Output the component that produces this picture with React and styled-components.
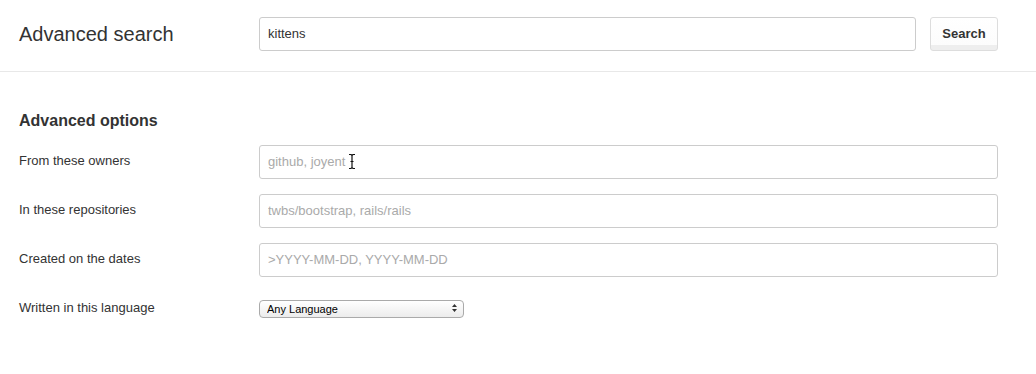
import React from 'react'
import styled, { createGlobalStyle } from 'styled-components'

const Global = createGlobalStyle`
body{
  margin:0;
  background:#fff;
  font-family:"Liberation Sans", Arial, sans-serif;
  color:#333;
}
`

const Header = styled.div`
display:flex;
align-items:flex-start;
height:54px;
padding:17px 38px 0 19px;
border-bottom:1px solid #e8e8e8;
background:#fff;
`

const Title = styled.h1`
width:240px;
margin:0;
font-size:20px;
font-weight:normal;
line-height:34px;
color:#333;
`

const TextBox = styled.input`
box-sizing:border-box;
flex:1;
height:34px;
padding:0 8px 1px;
border:1px solid #ccc;
border-radius:3px;
font-family:inherit;
font-size:13px;
color:#333;
background:#fff;
outline:none;
&::placeholder{
  color:#aaa;
}
`

const Button = styled.button`
box-sizing:border-box;
width:68px;
height:34px;
margin-left:14px;
border:1px solid #ddd;
border-radius:3px;
background:linear-gradient(#fff 0, #fcfcfc 27px, #eee 27px);
font-family:inherit;
font-size:13px;
font-weight:bold;
color:#333;
padding-bottom:3px;
`

const Section = styled.div`
padding:39px 38px 0 19px;
`

const Heading = styled.h2`
margin:0 0 14px;
font-size:16px;
line-height:20px;
font-weight:bold;
color:#333;
`

const Row = styled.div`
display:flex;
align-items:center;
height:34px;
margin-bottom:15px;
`

const Label = styled.label`
width:240px;
padding-bottom:4px;
font-size:13px;
color:#333;
`

const Field = styled.div`
position:relative;
flex:1;
display:flex;
`

const SelectWrap = styled.div`
position:relative;
width:205px;
height:18px;
margin-top:-2px;
`

const Select = styled.select`
appearance:none;
box-sizing:border-box;
width:100%;
height:18px;
padding:0 0 0 7px;
border:1px solid #aaa;
border-radius:4px;
background:linear-gradient(#fff, #ececec);
font-family:"Liberation Sans", Arial, sans-serif;
font-size:11px;
color:#000;
outline:none;
`

const Arrows = styled.svg`
position:absolute;
right:7px;
top:5px;
pointer-events:none;
`

const Cursor = styled.svg`
position:absolute;
left:89px;
top:8px;
pointer-events:none;
`

const rows = [
  ['From these owners', 'github, joyent'],
  ['In these repositories', 'twbs/bootstrap, rails/rails'],
  ['Created on the dates', '>YYYY-MM-DD, YYYY-MM-DD'],
]

export default function App() {
  return (
    <>
      <Global />
      <Header>
        <Title>Advanced search</Title>
        <TextBox defaultValue="kittens" />
        <Button>Search</Button>
      </Header>
      <Section>
        <Heading>Advanced options</Heading>
        {rows.map(([label, ph], i) => (
          <Row key={label}>
            <Label>{label}</Label>
            <Field>
              <TextBox placeholder={ph} />
              {i === 0 && (
                <Cursor width="8" height="17" viewBox="0 0 8 17">
                  <path d="M1 1.5h2l1 1 1-1h2M4 2.5v12M1 15.5h2l1-1 1 1h2M2.5 8.5h3" stroke="#111" strokeWidth="1.2" fill="none" />
                </Cursor>
              )}
            </Field>
          </Row>
        ))}
        <Row>
          <Label>Written in this language</Label>
          <SelectWrap>
            <Select defaultValue="any">
              <option value="any">Any Language</option>
              <option value="js">JavaScript</option>
              <option value="rb">Ruby</option>
            </Select>
            <Arrows width="5" height="8" viewBox="0 0 5 8">
              <path d="M0 3L2.5 0L5 3Z M0 5L2.5 8L5 5Z" fill="#333" />
            </Arrows>
          </SelectWrap>
        </Row>
      </Section>
    </>
  )
}
